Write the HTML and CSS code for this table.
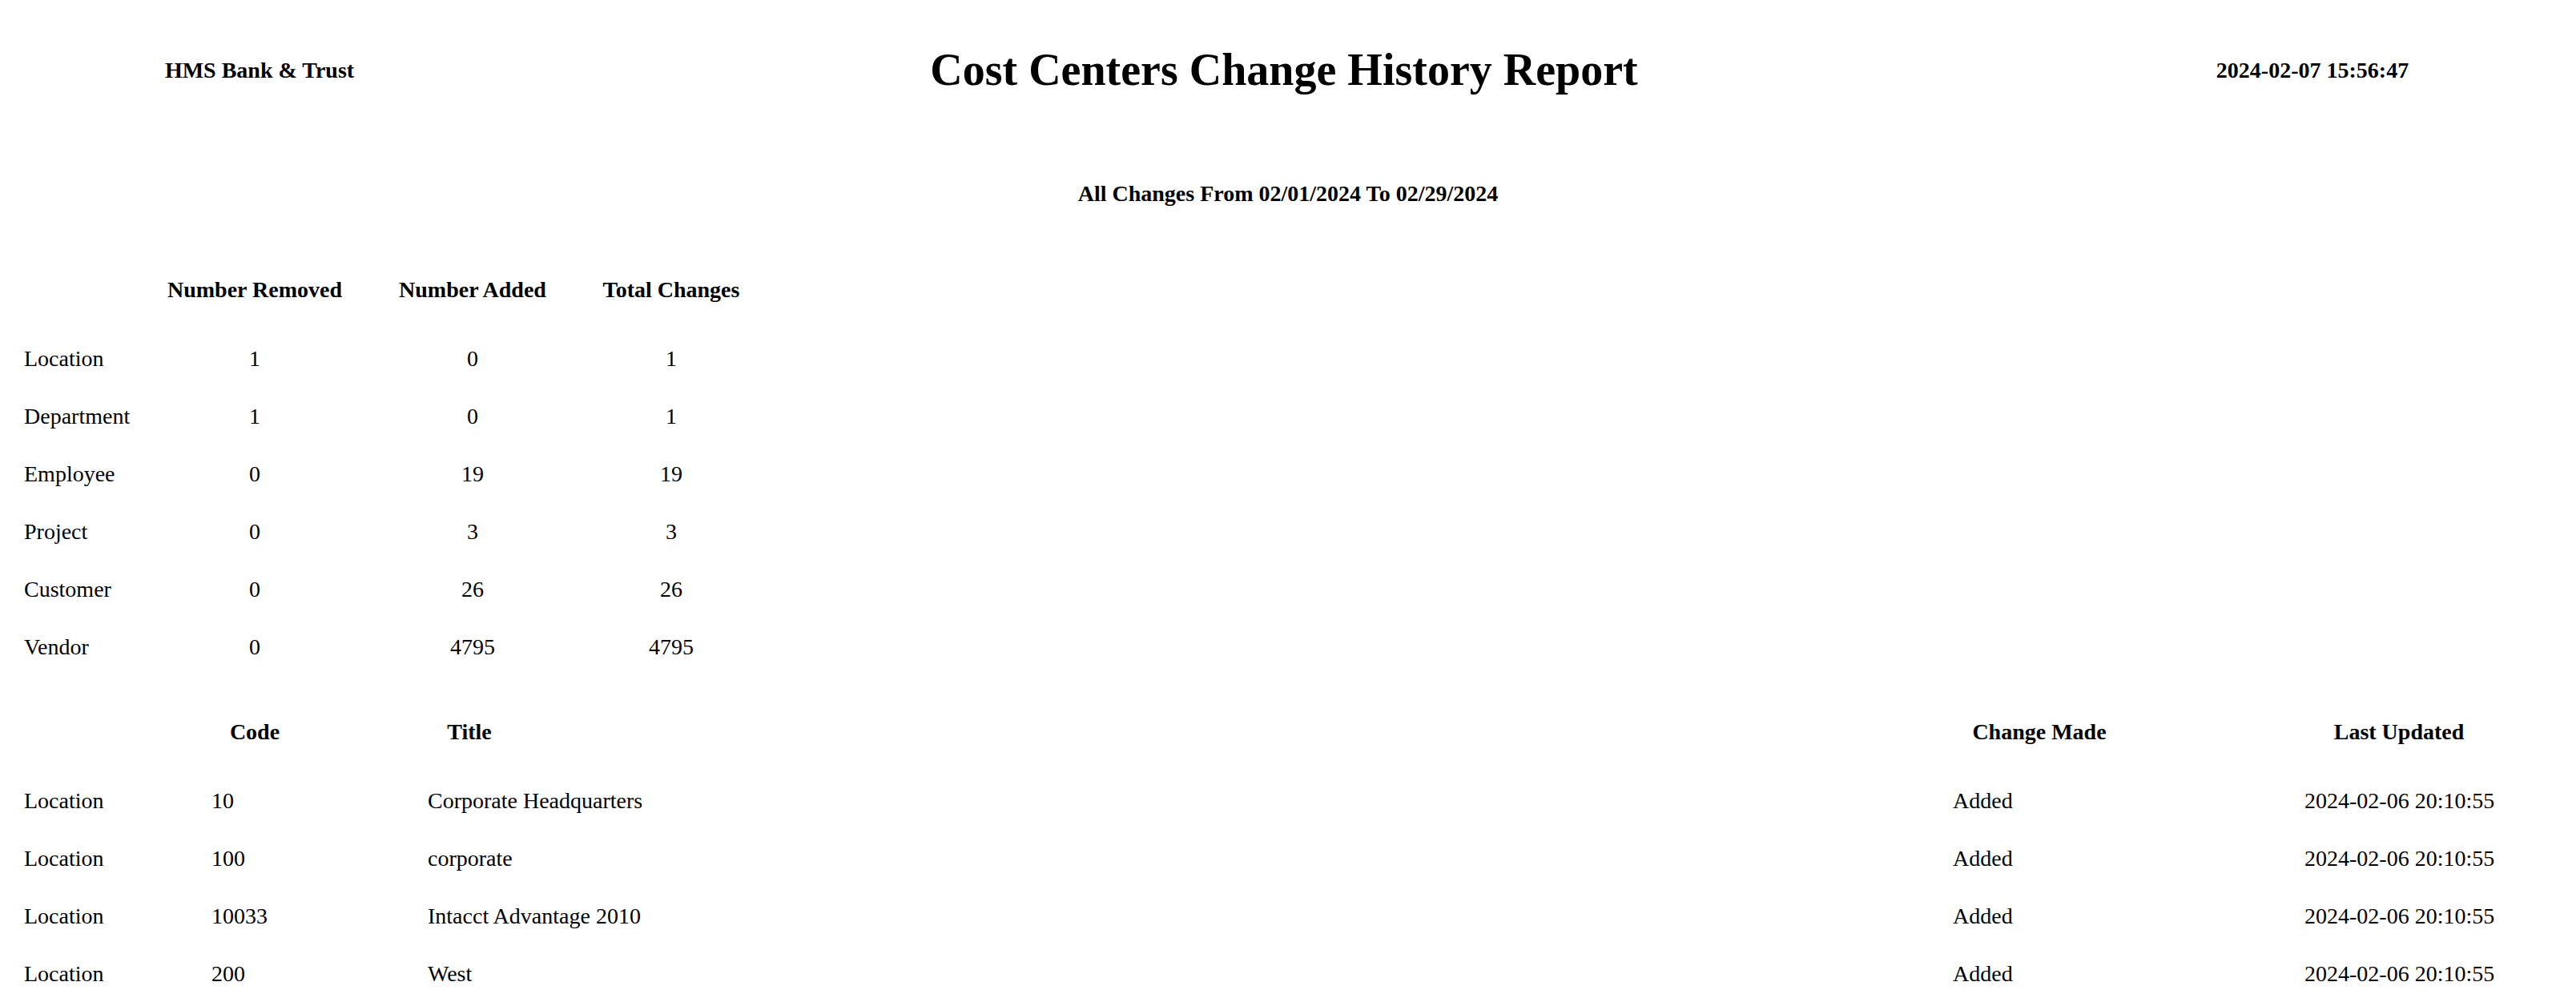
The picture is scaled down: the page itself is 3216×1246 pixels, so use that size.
FILE: index.html
```html
<!DOCTYPE html>
<html lang="en">
<head>
<meta charset="utf-8">
<title>Cost Centers Change History Report</title>
<link rel="stylesheet" href="styles.css">
</head>
<body>
<header class="report-head">
  <div class="org">HMS Bank &amp; Trust</div>
  <h1 class="title">Cost Centers Change History Report</h1>
  <div class="stamp">2024-02-07 15:56:47</div>
</header>

<p class="range">All Changes From 02/01/2024 To 02/29/2024</p>

<section class="summary">
  <div class="th"></div>
  <div class="th">Number Removed</div>
  <div class="th">Number Added</div>
  <div class="th">Total Changes</div>

  <div class="label">Location</div><div class="num">1</div><div class="num">0</div><div class="num">1</div>
  <div class="label">Department</div><div class="num">1</div><div class="num">0</div><div class="num">1</div>
  <div class="label">Employee</div><div class="num">0</div><div class="num">19</div><div class="num">19</div>
  <div class="label">Project</div><div class="num">0</div><div class="num">3</div><div class="num">3</div>
  <div class="label">Customer</div><div class="num">0</div><div class="num">26</div><div class="num">26</div>
  <div class="label">Vendor</div><div class="num">0</div><div class="num">4795</div><div class="num">4795</div>
</section>

<section class="detail">
  <div class="c-type th"></div>
  <div class="c-code th">Code</div>
  <div class="c-title th">Title</div>
  <div class="c-change th">Change Made</div>
  <div class="c-updated th">Last Updated</div>

  <div class="c-type">Location</div>
  <div class="c-code td">10</div>
  <div class="c-title td">Corporate Headquarters</div>
  <div class="c-change td">Added</div>
  <div class="c-updated td">2024-02-06 20:10:55</div>

  <div class="c-type">Location</div>
  <div class="c-code td">100</div>
  <div class="c-title td">corporate</div>
  <div class="c-change td">Added</div>
  <div class="c-updated td">2024-02-06 20:10:55</div>

  <div class="c-type">Location</div>
  <div class="c-code td">10033</div>
  <div class="c-title td">Intacct Advantage 2010</div>
  <div class="c-change td">Added</div>
  <div class="c-updated td">2024-02-06 20:10:55</div>

  <div class="c-type">Location</div>
  <div class="c-code td">200</div>
  <div class="c-title td">West</div>
  <div class="c-change td">Added</div>
  <div class="c-updated td">2024-02-06 20:10:55</div>
</section>
</body>
</html>
```

FILE: styles.css
```css
html, body {
  margin: 0;
  padding: 0;
  background: #ffffff;
}

body {
  font-family: "Liberation Serif", "Times New Roman", serif;
  font-size: 28px;
  color: #000000;
  overflow: hidden;
}

/* ---------- header ---------- */
.report-head {
  display: grid;
  grid-template-columns: 648px 1fr 658px;
  align-items: center;
  justify-items: center;
  padding-top: 56px;
  height: 62px;
}

.org,
.stamp {
  font-weight: 700;
  line-height: 31px;
  white-space: nowrap;
}

.title {
  margin: 0;
  font-size: 56px;
  font-weight: 700;
  line-height: 62px;
  white-space: nowrap;
}

.range {
  margin: 108px 0 0;
  text-align: center;
  font-weight: 700;
  line-height: 31px;
}

/* ---------- summary ---------- */
.summary {
  display: grid;
  grid-template-columns: 160px 256px 288px 208px;
  grid-template-rows: 86px;
  grid-auto-rows: 72px;
  padding-left: 30px;
  margin-top: 69px;
  line-height: 72px;
  white-space: nowrap;
}

.summary .th {
  font-weight: 700;
  text-align: center;
}

.summary .num {
  text-align: center;
}

/* ---------- detail ---------- */
.detail {
  display: grid;
  grid-template-columns: 180px 216px 320px 1fr 232px 208px 250px 96px;
  grid-template-rows: 86px;
  grid-auto-rows: 72px;
  padding-left: 30px;
  margin-top: 34px;
  line-height: 72px;
  white-space: nowrap;
}

.detail .th {
  font-weight: 700;
  text-align: center;
}

.c-type { grid-column: 1; }
.c-code { grid-column: 2; }
.c-title { grid-column: 3; }
.c-change { grid-column: 5; }
.c-updated { grid-column: 7; }

.c-code.td { padding-left: 54px; }
.c-title.td { padding-left: 108px; }
.c-change.td { padding-left: 8px; }
.c-updated.td { padding-left: 7px; }
```
